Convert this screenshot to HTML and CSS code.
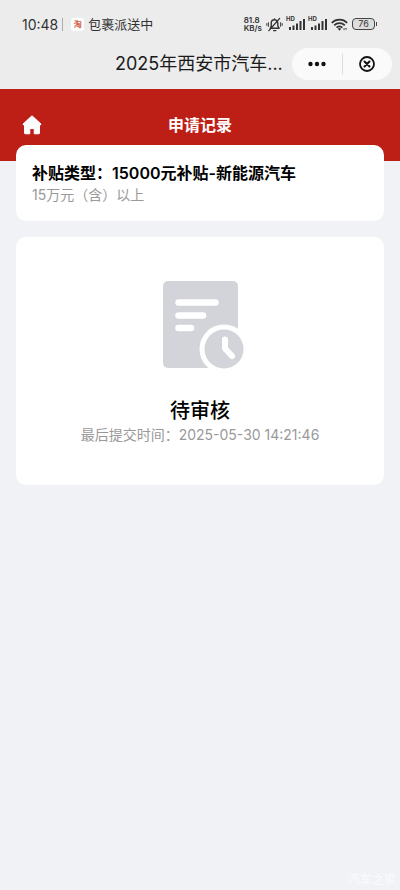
FILE: index.html
```html
<!DOCTYPE html>
<html lang="zh-CN">
<head>
<meta charset="utf-8">
<meta name="viewport" content="width=device-width, initial-scale=1">
<title>申请记录</title>
<link rel="stylesheet" href="styles.css">
</head>
<body>
<div class="system">
  <div class="status">
    <time class="clock">10:48</time>
    <span class="divider"></span>
    <span class="app-badge">淘</span>
    <span class="notice">包裹派送中</span>
    <div class="indicators">
      <span class="speed"><span>81.8</span><span>KB/s</span></span>
      <svg class="bell" viewBox="0 0 18 16" aria-hidden="true">
        <g fill="none" stroke="#333" stroke-width="1.5" stroke-linecap="round" stroke-linejoin="round">
          <path d="M4.500 12h9.500l-1.500-2.500V6.500a3.500 3.500 0 0 0-7 0v3zM8 14.500h2.500M9 2.500V2M3 14.500 14.500 1.500"/>
          <path d="M2.500 6v4M.8 7v2M15.500 6v4M17.200 7v2" stroke-width="1"/>
        </g>
      </svg>
      <span class="signal"><span class="hd">HD</span>
        <svg viewBox="0 0 18 12" aria-hidden="true"><path fill="#333" d="M2 9h2v3H2zM5.500 7.500h2V12h-2zM9 5.500h2V12H9zM12.500 3h2v9h-2zM16 1h2v11h-2z"/></svg>
      </span>
      <span class="signal"><span class="hd">HD</span>
        <svg viewBox="0 0 18 12" aria-hidden="true"><path fill="#333" d="M2 9h2v3H2zM5.500 7.500h2V12h-2zM9 5.500h2V12H9zM12.500 3h2v9h-2zM16 1h2v11h-2z"/></svg>
      </span>
      <svg class="wifi" viewBox="0 0 17 13" aria-hidden="true">
        <g fill="none" stroke="#333" stroke-width="1.700"><path d="M.8 4.800a11 11 0 0 1 15.400 0M3.200 7.300a7.500 7.500 0 0 1 10.600 0M5.600 9.700a4 4 0 0 1 5.800 0"/></g>
        <path fill="#333" d="m8.500 12.700-1.700-1.900a2.500 2.500 0 0 1 3.400 0zM12 11l1.500-1v2.500zM14 10h1.500v2.500z"/>
      </svg>
      <span class="battery">76</span>
    </div>
  </div>
  <div class="nav">
    <div class="nav-title">2025年西安市汽车...</div>
    <div class="capsule">
      <button type="button" aria-label="更多">
        <svg viewBox="0 0 20 20" aria-hidden="true"><g fill="#111"><circle cx="3.500" cy="10" r="2.200"/><circle cx="10" cy="10" r="2.200"/><circle cx="16.500" cy="10" r="2.200"/></g></svg>
      </button>
      <button type="button" aria-label="关闭">
        <svg viewBox="0 0 20 20" aria-hidden="true"><circle cx="10" cy="10" r="7" fill="none" stroke="#111" stroke-width="1.800"/><path d="m7.500 7.500 5 5m0-5-5 5" stroke="#111" stroke-width="2" stroke-linecap="round"/></svg>
      </button>
    </div>
  </div>
</div>
<header class="banner">
  <a class="home" href="#" aria-label="首页">
    <svg viewBox="0 0 20 20" aria-hidden="true"><path fill="#fff" stroke="#fff" stroke-linejoin="round" d="M10 .8 19 9l-.4.900h-1.100V18a.8.800 0 0 1-.8.800h-4.500V13.500H7.800v5.300H3.300a.8.800 0 0 1-.8-.8V9.900H1.400L1 9z"/></svg>
  </a>
  <h1>申请记录</h1>
</header>
<main>
  <section class="card type">
    <h2>补贴类型：15000元补贴-新能源汽车</h2>
    <p>15万元（含）以上</p>
  </section>
  <section class="card state">
    <svg class="doc" viewBox="-8 0 92 88" aria-hidden="true">
      <rect x="1" y="0" width="75" height="87" rx="5" fill="#d3d4da"/>
      <path d="M16.500 21.500h37M16.500 34.500h24.500M16.500 47h12.500" stroke="#fff" stroke-width="6.500" stroke-linecap="round"/>
      <circle cx="62" cy="68" r="24.500" fill="#fff"/>
      <circle cx="62" cy="68" r="19.500" fill="#d3d4da"/>
      <path d="M63 58.500v9l7 7.500" fill="none" stroke="#fff" stroke-width="6" stroke-linecap="round" stroke-linejoin="round"/>
    </svg>
    <h2>待审核</h2>
    <p>最后提交时间：2025-05-30 14:21:46</p>
  </section>
</main>
<div class="watermark">汽车之家</div>
</body>
</html>
```
FILE: styles.css
```css
* {
  box-sizing: border-box;
  margin: 0;
  padding: 0;
}

body {
  min-height: 100vh;
  background: #f1f2f5;
  color: #000;
  font-family: Inter, "Noto Sans CJK SC", sans-serif;
  font-size: 14px;
}

button {
  border: 0;
  background: none;
}

svg {
  display: block;
  flex: none;
}

.system {
  background: #ececec;
  padding-bottom: 9px;
}

.status {
  display: flex;
  align-items: center;
  height: 48px;
  padding: 0 25px 0 22px;
  color: #333;
}

.divider {
  width: 1px;
  height: 13px;
  margin: 0 8px 0 4px;
  background: #aaa;
}

.app-badge {
  width: 13px;
  height: 13px;
  margin-right: 4px;
  border-radius: 3px;
  background: #fff;
  color: #d2573c;
  font-size: 8px;
  font-weight: 700;
  line-height: 13px;
  text-align: center;
}

.notice {
  font-size: 13px;
  line-height: 16px;
}

.indicators {
  display: flex;
  align-items: center;
  gap: 4px;
  margin-left: auto;
}

.speed {
  display: flex;
  flex-direction: column;
  font-size: 8px;
  font-weight: 600;
  line-height: 8px;
}

.bell {
  width: 17px;
  height: 15px;
}

.signal {
  position: relative;
}

.signal svg {
  width: 18px;
  height: 12px;
}

.hd {
  position: absolute;
  top: -2px;
  left: -1px;
  font-size: 6px;
  font-weight: 700;
  line-height: 6px;
}

.wifi {
  width: 17px;
  height: 13px;
}

.battery {
  position: relative;
  width: 23px;
  height: 12px;
  border: 1px solid #444;
  border-radius: 4px;
  background: #ddd;
  font-size: 9px;
  line-height: 10px;
  text-align: center;
}

.battery::after {
  content: "";
  position: absolute;
  top: 3px;
  right: -3px;
  width: 1px;
  height: 4px;
  background: #444;
}

.nav {
  display: grid;
  grid-template-columns: 1fr 170px 1fr;
  align-items: center;
  padding: 0 8px;
}

.nav-title {
  grid-column: 2;
  color: #1a1a1a;
  font-size: 18px;
  line-height: 32px;
  white-space: nowrap;
}

.capsule {
  display: flex;
  justify-self: end;
  width: 100px;
  height: 32px;
  border-radius: 16px;
  background: #fafafa;
}

.capsule button {
  display: flex;
  flex: 1;
  align-items: center;
  justify-content: center;
}

.capsule button + button {
  position: relative;
}

.capsule button + button::before {
  content: "";
  position: absolute;
  top: 6px;
  left: 0;
  width: 1px;
  height: 20px;
  background: #ddd;
}

.capsule svg {
  width: 20px;
  height: 20px;
}

.banner {
  display: grid;
  grid-template-columns: 1fr auto 1fr;
  align-items: center;
  height: 72px;
  padding: 0 22px;
  background: #bd1e15;
  color: #fff;
}

.home {
  justify-self: start;
}

.home svg {
  width: 20px;
  height: 20px;
}

.banner h1 {
  font-size: 16px;
  font-weight: 600;
  line-height: 24px;
}

main {
  position: relative;
  display: grid;
  gap: 16px;
  margin-top: -16px;
  padding: 0 16px;
}

.card {
  padding: 16px;
  border-radius: 10px;
  background: #fff;
}

.card p {
  color: #999;
  line-height: 20px;
}

.type h2 {
  font-size: 16px;
  font-weight: 600;
  line-height: 24px;
}

.state {
  display: flex;
  flex-direction: column;
  align-items: center;
  padding: 44px 16px 40px;
}

.state h2 {
  margin-top: 28px;
  font-size: 20px;
  font-weight: 500;
  line-height: 28px;
}

.doc {
  width: 92px;
  height: 88px;
}

.watermark {
  position: fixed;
  right: 4px;
  bottom: 2px;
  color: #fafbfc;
  font-size: 12px;
  line-height: 16px;
}
```
